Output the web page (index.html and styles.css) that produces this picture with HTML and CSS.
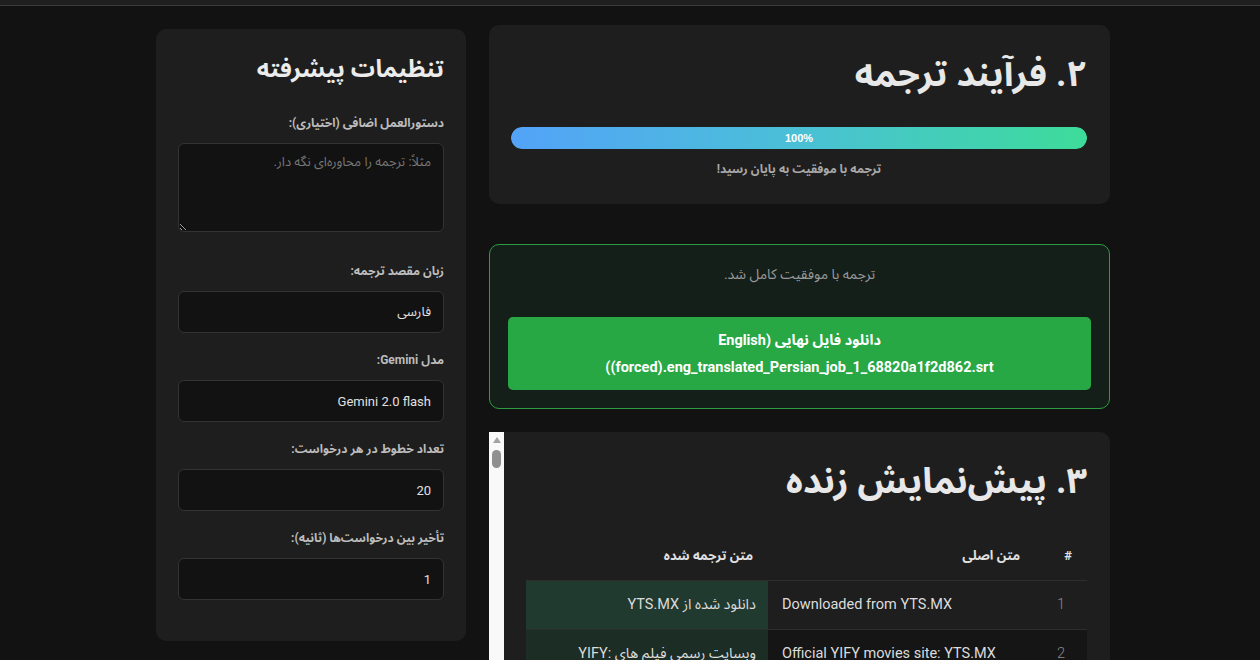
FILE: index.html
```html
<!DOCTYPE html>
<html lang="fa" dir="rtl">
<head>
<meta charset="utf-8">
<title>مترجم زیرنویس</title>
<link rel="stylesheet" href="styles.css">
</head>
<body>
<div class="topbar"></div>
<div class="layout">
  <main class="main">
    <section class="card progress-card">
      <h2 class="card-title">۲. فرآیند ترجمه</h2>
      <div class="progress">
        <div class="progress-fill" style="width:100%">100%</div>
      </div>
      <p class="progress-status">ترجمه با موفقیت به پایان رسید!</p>
    </section>

    <section class="result">
      <p class="result-text">ترجمه با موفقیت کامل شد.</p>
      <a class="download" href="#">دانلود فایل نهایی (English (forced).eng_translated_Persian_job_1_68820a1f2d862.srt)</a>
    </section>

    <section class="card preview">
      <div class="preview-body">
        <h2 class="card-title">۳. پیش‌نمایش زنده</h2>
        <table class="preview-table">
          <colgroup>
            <col class="col-num">
            <col class="col-orig">
            <col class="col-trans">
          </colgroup>
          <thead>
            <tr>
              <th>#</th>
              <th>متن اصلی</th>
              <th>متن ترجمه شده</th>
            </tr>
          </thead>
          <tbody>
            <tr>
              <td class="num">1</td>
              <td class="orig">Downloaded from YTS.MX</td>
              <td class="trans">دانلود شده از YTS.MX</td>
            </tr>
            <tr>
              <td class="num">2</td>
              <td class="orig">Official YIFY movies site: YTS.MX</td>
              <td class="trans">وبسایت رسمی فیلم های YIFY: YTS.MX</td>
            </tr>
          </tbody>
        </table>
      </div>
      <div class="scrollbar">
        <span class="scroll-arrow"></span>
        <span class="scroll-thumb"></span>
      </div>
    </section>
  </main>

  <aside class="sidebar">
    <h3 class="sidebar-title">تنظیمات پیشرفته</h3>
    <div class="field field-area">
      <label class="field-label">دستورالعمل اضافی (اختیاری):</label>
      <textarea class="textarea" placeholder="مثلاً: ترجمه را محاوره‌ای نگه دار."></textarea>
    </div>
    <div class="field">
      <label class="field-label">زبان مقصد ترجمه:</label>
      <input class="input" type="text" value="فارسی">
    </div>
    <div class="field">
      <label class="field-label">مدل Gemini:</label>
      <input class="input" type="text" value="Gemini 2.0 flash">
    </div>
    <div class="field">
      <label class="field-label">تعداد خطوط در هر درخواست:</label>
      <input class="input" type="text" value="20">
    </div>
    <div class="field">
      <label class="field-label">تأخیر بین درخواست‌ها (ثانیه):</label>
      <input class="input" type="text" value="1">
    </div>
  </aside>
</div>
</body>
</html>
```

FILE: styles.css
```css
* {
  box-sizing: border-box;
}

html, body {
  margin: 0;
  height: 100%;
  overflow: hidden;
}

body {
  background: #121212;
  color: #e6e6e6;
  font-family: Roboto, "Noto Sans Arabic", "DejaVu Sans", sans-serif;
  font-size: 13px;
}

.topbar {
  height: 6px;
  background: #1f1f1f;
  border-bottom: 1px solid #3a3a3a;
}

.layout {
  display: flex;
  align-items: flex-start;
  gap: 23px;
  padding: 19px 150px 0 0;
}

.main {
  width: 621px;
  flex: none;
  display: flex;
  flex-direction: column;
}

.sidebar {
  width: 310px;
  flex: none;
  margin-top: 4px;
  background: #1e1e1e;
  border-radius: 10px;
  padding: 22px 22px 41px;
}

.card {
  background: #1e1e1e;
  border-radius: 10px;
}

.card-title {
  margin: 0;
  font-size: 36px;
  font-weight: 700;
  line-height: 54px;
  color: #e8e8e8;
}

/* progress card */
.progress-card {
  padding: 22px 23px 25px 22px;
}

.progress {
  margin-top: 26px;
  height: 22px;
  border-radius: 11px;
  background: #333;
  overflow: hidden;
}

.progress-fill {
  height: 100%;
  border-radius: 11px;
  background: linear-gradient(90deg, #53a3f8 0%, #4ac0d6 50%, #3ddc9a 100%);
  color: #fff;
  font-family: "Liberation Sans", Arial, sans-serif;
  font-weight: 700;
  font-size: 11px;
  line-height: 22px;
  text-align: center;
}

.progress-status {
  margin: 10px 0 0;
  text-align: center;
  font-size: 12px;
  font-weight: 700;
  line-height: 20px;
  color: #a8a8a8;
}

/* result */
.result {
  margin-top: 40px;
  background: #151f19;
  border: 1px solid #2c9c41;
  border-radius: 10px;
  padding: 19px 18px 18px;
}

.result-text {
  margin: 0;
  text-align: center;
  font-size: 14px;
  line-height: 20px;
  color: #999;
}

.download {
  display: block;
  margin-top: 33px;
  padding: 10px 30px 9px;
  background: #28a745;
  border-radius: 5px;
  color: #fff;
  text-decoration: none;
  text-align: center;
  font-weight: 700;
  font-size: 14.5px;
  line-height: 27px;
}

/* preview */
.preview {
  margin-top: 23px;
  display: flex;
  align-items: stretch;
  min-height: 260px;
}

.preview-body {
  flex: 1;
  padding: 22px 23px 22px 22px;
}

.scrollbar {
  width: 15px;
  flex: none;
  background: #f9f9f9;
  display: flex;
  flex-direction: column;
  align-items: center;
  padding-top: 5px;
}

.scroll-arrow {
  width: 0;
  height: 0;
  border-left: 4.5px solid transparent;
  border-right: 4.5px solid transparent;
  border-bottom: 6px solid #a3a3a3;
}

.scroll-thumb {
  margin-top: 7px;
  width: 9px;
  height: 18px;
  border-radius: 5px;
  background: #8f8f8f;
}

.preview-table {
  margin-top: 24px;
  width: 100%;
  border-collapse: collapse;
  table-layout: fixed;
}

.col-num {
  width: 52px;
}

.col-orig {
  width: 267px;
}

.preview-table th {
  padding: 14px 15px;
  text-align: right;
  font-size: 13px;
  font-weight: 700;
  line-height: 20px;
  color: #e0e0e0;
  border-bottom: 1px solid #2e2e2e;
}

.preview-table td {
  padding: 14px 12px;
  font-size: 14.5px;
  line-height: 20px;
  color: #dcdcdc;
  border-bottom: 1px solid #2e2e2e;
  vertical-align: top;
}

.preview-table tbody tr:nth-child(even) td {
  background: #151515;
}

.preview-table td.num {
  text-align: center;
  color: #8a8a8a;
  font-weight: 300;
}

.preview-table td.orig {
  direction: ltr;
  text-align: left;
  padding-left: 14px;
}

.preview-table td.trans {
  text-align: right;
  background: #213a30;
}

.preview-table tbody tr:nth-child(even) td.trans {
  background: #1b2d24;
}

/* sidebar */
.sidebar-title {
  margin: 0 0 27px;
  font-size: 24px;
  font-weight: 700;
  line-height: 36px;
  color: #ececec;
}

.field {
  margin-bottom: 18px;
}

.field:last-child {
  margin-bottom: 0;
}

.field-area {
  margin-bottom: 30px;
}

.field-label {
  display: block;
  margin-bottom: 11px;
  font-size: 12px;
  font-weight: 700;
  line-height: 18px;
  color: #bcbcbc;
}

.textarea,
.input {
  display: block;
  width: 100%;
  background: #121212;
  border: 1px solid #333;
  border-radius: 6px;
  color: #e0e0e0;
  font-family: Roboto, "Noto Sans Arabic", "DejaVu Sans", sans-serif;
  font-size: 13px;
  outline: none;
}

.textarea {
  height: 89px;
  padding: 8px 12px;
  line-height: 20px;
  resize: vertical;
}

.textarea::placeholder {
  color: #777;
}

.input {
  height: 42px;
  padding: 0 12px;
}
```
